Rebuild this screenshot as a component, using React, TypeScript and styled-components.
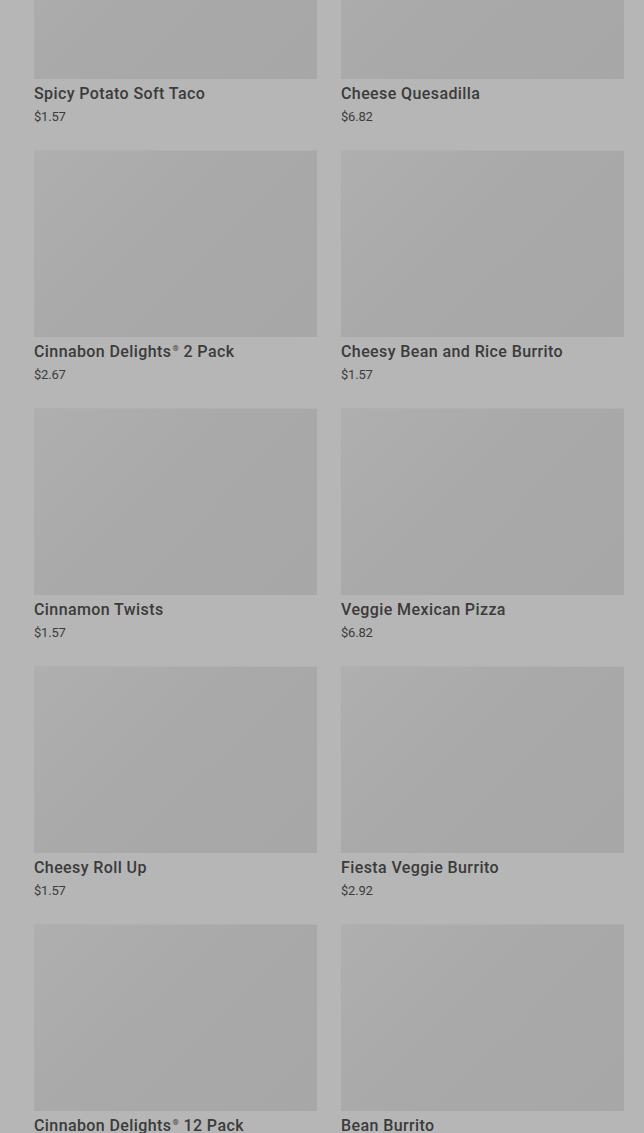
import React from 'react';
import styled, { createGlobalStyle } from 'styled-components';

const GlobalStyle = createGlobalStyle`
  html, body {
    margin: 0;
    background-color: #b6b6b6;
    overflow: hidden;
  }
  body {
    font-family: Roboto, "Liberation Sans", sans-serif;
    color: #393939;
  }
`;

const Page = styled.main`
  height: 1133px;
  overflow: hidden;
`;

const Grid = styled.section`
  display: grid;
  grid-template-columns: 283px 283px;
  column-gap: 24px;
  row-gap: 22px;
  margin-top: -108px;
  padding: 0 20px 0 34px;
`;

const Card = styled.article`
  display: flex;
  flex-direction: column;
`;

const Picture = styled.div`
  height: 187px;
  background: linear-gradient(135deg, #afafaf 0%, #a9a9a9 45%, #a7a7a7 100%);
  box-shadow: inset 0 1px 0 #b0b0b0;
`;

const Title = styled.h3`
  margin: 3px 0 0;
  height: 24px;
  font-size: 16px;
  font-weight: 500;
  line-height: 24px;
  letter-spacing: 0.4px;
  color: #3b3b3b;

  sup {
    font-size: 8px;
    line-height: 0;
    vertical-align: 0;
    position: relative;
    top: -6px;
    margin-left: 1px;
  }
`;

const Price = styled.span`
  font-size: 13px;
  line-height: 22px;
  color: #3c3c3c;
  letter-spacing: -0.2px;
`;

interface Item {
  name: string;
  price: string;
}

const items: Item[] = [
  { name: 'Spicy Potato Soft Taco', price: '$1.57' },
  { name: 'Cheese Quesadilla', price: '$6.82' },
  { name: 'Cinnabon Delights® 2 Pack', price: '$2.67' },
  { name: 'Cheesy Bean and Rice Burrito', price: '$1.57' },
  { name: 'Cinnamon Twists', price: '$1.57' },
  { name: 'Veggie Mexican Pizza', price: '$6.82' },
  { name: 'Cheesy Roll Up', price: '$1.57' },
  { name: 'Fiesta Veggie Burrito', price: '$2.92' },
  { name: 'Cinnabon Delights® 12 Pack', price: '$8.34' },
  { name: 'Bean Burrito', price: '$1.99' },
];

const renderName = (name: string) => {
  const parts = name.split('®');
  if (parts.length === 1) return name;
  return (
    <>
      {parts[0]}
      <sup>®</sup>
      {parts[1]}
    </>
  );
};

const App: React.FC = () => {
  return (
    <Page>
      <GlobalStyle />
      <Grid>
        {items.map((item) => (
          <Card key={item.name}>
            <Picture />
            <Title>{renderName(item.name)}</Title>
            <Price>{item.price}</Price>
          </Card>
        ))}
      </Grid>
    </Page>
  );
};

export default App;
